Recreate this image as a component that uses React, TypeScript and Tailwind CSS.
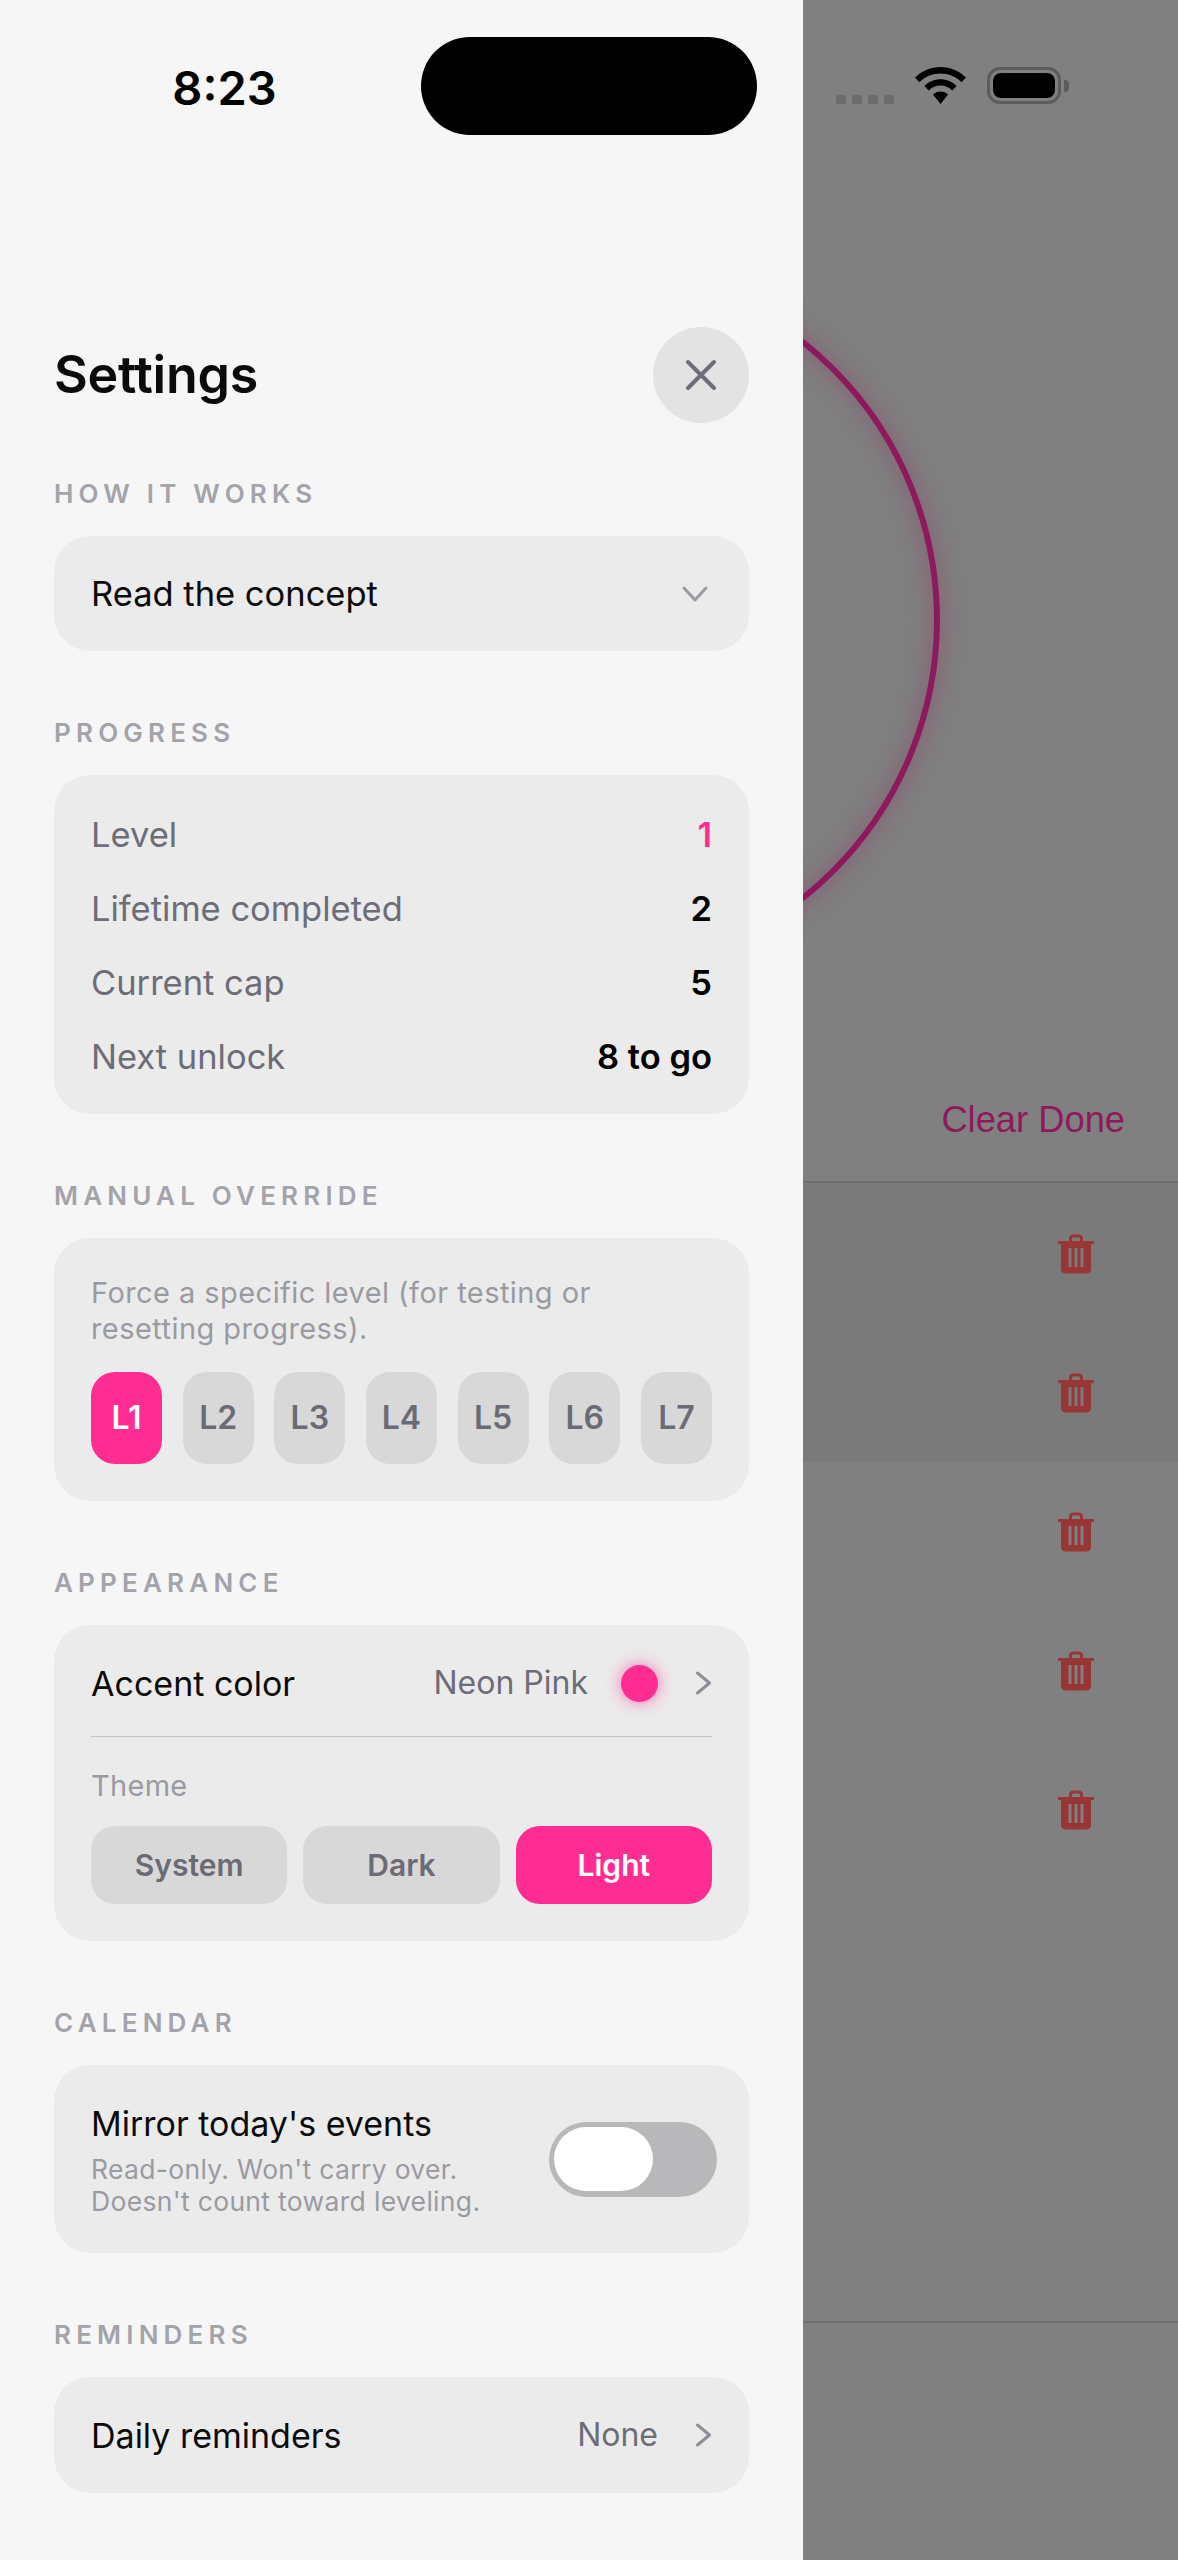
import React from "react";

const levels = ["L1", "L2", "L3", "L4", "L5", "L6", "L7"];
const stats = [
  { label: "Level", value: "1", accent: true },
  { label: "Lifetime completed", value: "2" },
  { label: "Current cap", value: "5" },
  { label: "Next unlock", value: "8 to go" },
];
const themes = ["System", "Dark", "Light"];
const taskRows = [0, 1, 2, 3, 4];

const Section = ({ title, children }: { title: string; children: React.ReactNode }) => (
  <section className="mb-[66px]">
    <h2 className="h-[32px] mb-[26px] text-[26px] leading-[32px] font-semibold tracking-[0.2em] text-[#a3a3ab]">
      {title}
    </h2>
    <div className="rounded-[36px] bg-[#ebebeb] px-[37px]">{children}</div>
  </section>
);

const ChevronRight = () => (
  <svg width="17" height="24" viewBox="0 0 17 24" fill="none" className="block">
    <path d="M2.5 2 L14.5 12 L2.5 22" stroke="#8e8e96" strokeWidth="3" strokeLinecap="round" strokeLinejoin="round" />
  </svg>
);

const TrashIcon = () => (
  <svg width="36" height="40" viewBox="0 0 36 40" className="block">
    <path
      fill="#983535"
      fillRule="evenodd"
      d="M11 7 V4.5 C11 2 13 0.5 15 0.5 H21 C23 0.5 25 2 25 4.5 V7 H35 C35.6 7 36 7.4 36 8 V9 C36 9.6 35.6 10 35 10 H33 V35 C33 37.8 31 39.5 28.5 39.5 H7.5 C5 39.5 3 37.8 3 35 V10 H1 C0.4 10 0 9.6 0 9 V8 C0 7.4 0.4 7 1 7 Z M14 7 H22 V5 C22 4 21.4 3.5 20.5 3.5 H15.5 C14.6 3.5 14 4 14 5 Z M10.5 14 V33 H13.5 V14 Z M16.5 14 V33 H19.5 V14 Z M22.5 14 V33 H25.5 V14 Z"
    />
  </svg>
);

const StatusIcons = () => (
  <div className="flex items-end h-[104px] pl-[33px]">
    <div className="flex gap-[6px]">
      {[0, 1, 2, 3].map((i) => (
        <span key={i} className="block w-[10px] h-[9px] rounded-[2px] bg-[#6b6b6b]" />
      ))}
    </div>
    <svg width="51" height="37" viewBox="0 0 51 37" className="block ml-[21px]">
      <path
        fill="#000"
        d="M25.5 0 C35 0 44 3.8 51 10.6 L46.6 15.2 C41 9.6 33.5 6.4 25.5 6.4 C17.5 6.4 10 9.6 4.4 15.2 L0 10.6 C7 3.8 16 0 25.5 0 Z M25.5 12.2 C31.5 12.2 37.2 14.6 41.6 18.9 L37.2 23.4 C34 20.3 29.9 18.6 25.5 18.6 C21.1 18.6 17 20.3 13.8 23.4 L9.4 18.9 C13.8 14.6 19.5 12.2 25.5 12.2 Z M25.5 24.4 C28.4 24.4 31 25.5 33 27.5 L25.5 37 L18 27.5 C20 25.5 22.6 24.4 25.5 24.4 Z"
      />
    </svg>
    <div className="flex items-center ml-[21px]">
      <div className="w-[74px] h-[37px] rounded-[13px] border-[3px] border-[#5c5c5c] p-[3px]">
        <div className="w-full h-full rounded-[8px] bg-black" />
      </div>
      <div className="w-[5px] h-[12px] ml-[3px] rounded-r-[4px] bg-[#5c5c5c]" />
    </div>
  </div>
);

const App = () => {
  return (
    <div className="flex w-[1178px] h-[2560px] overflow-hidden font-['Inter',sans-serif]">
      <aside className="w-[803px] shrink-0 h-full bg-[#f6f6f6] px-[54px] relative z-10">
        <div className="flex h-[98px] mt-[37px] items-center -mr-[8px]">
          <span className="w-[367px] shrink-0 text-center text-[47px] leading-none font-semibold text-black mt-[2px] pr-[26px]">
            8:23
          </span>
          <div className="w-[336px] h-[98px] shrink-0 rounded-full bg-black" />
        </div>

        <header className="flex items-center justify-between mt-[192px] mb-[55px] h-[96px]">
          <h1 className="text-[52px] leading-none font-semibold tracking-[-0.005em] text-[#0b0b0b]">Settings</h1>
          <button className="w-[96px] h-[96px] rounded-full bg-[#e3e3e3] flex items-center justify-center">
            <svg width="32" height="32" viewBox="0 0 32 32" fill="none">
              <path d="M3 3 L29 29 M29 3 L3 29" stroke="#6d6d78" strokeWidth="4" strokeLinecap="round" />
            </svg>
          </button>
        </header>

        <Section title="HOW IT WORKS">
          <div className="flex h-[115px] items-center justify-between">
            <span className="text-[34.5px] text-[#0b0b0b]">Read the concept</span>
            <svg width="26" height="16" viewBox="0 0 26 16" fill="none" className="block mr-[4px]">
              <path d="M2 2 L13 14 L24 2" stroke="#9a9aa0" strokeWidth="3" strokeLinecap="round" strokeLinejoin="round" />
            </svg>
          </div>
        </Section>

        <Section title="PROGRESS">
          <div className="pt-[23px] pb-[20px]">
            {stats.map((s) => (
              <div key={s.label} className="flex h-[74px] items-center justify-between text-[34.5px]">
                <span className="text-[#6d6d78]">{s.label}</span>
                <span className={`font-semibold ${s.accent ? "text-[#ff2d92]" : "text-black"}`}>{s.value}</span>
              </div>
            ))}
          </div>
        </Section>

        <Section title="MANUAL OVERRIDE">
          <div className="pt-[37px] pb-[37px]">
            <p className="text-[29px] leading-[36px] tracking-[0.015em] text-[#9a9aa2]">
              Force a specific level (for testing or
              <br />
              resetting progress).
            </p>
            <div className="flex justify-between mt-[25px]">
              {levels.map((l, i) => (
                <div
                  key={l}
                  className={`w-[71px] h-[92px] rounded-[24px] flex items-center justify-center text-[32px] font-semibold ${
                    i === 0 ? "bg-[#ff2d92] text-white" : "bg-[#d8d8d8] text-[#6b6b75]"
                  }`}
                >
                  {l}
                </div>
              ))}
            </div>
          </div>
        </Section>

        <Section title="APPEARANCE">
          <div className="flex h-[112px] pt-[5px] items-center border-b border-[#c4c4c8]">
            <span className="text-[34px] text-[#0b0b0b]">Accent color</span>
            <span className="ml-auto text-[32px] text-[#6d6d78]">Neon Pink</span>
            <span className="ml-[33px] mr-[37px] w-[37px] h-[37px] rounded-full bg-[#ff2d92] shadow-[0_0_16px_#ff2d92aa]" />
            <ChevronRight />
          </div>
          <div className="pb-[37px]">
            <p className="mt-[31px] text-[29px] leading-[36px] tracking-[0.01em] text-[#9a9aa2]">Theme</p>
            <div className="grid grid-cols-3 gap-[16px] mt-[22px]">
              {themes.map((t) => (
                <div
                  key={t}
                  className={`h-[78px] rounded-[24px] flex items-center justify-center text-[30px] font-semibold ${
                    t === "Light" ? "bg-[#ff2d92] text-white" : "bg-[#d8d8d8] text-[#6b6b75]"
                  }`}
                >
                  {t}
                </div>
              ))}
            </div>
          </div>
        </Section>

        <Section title="CALENDAR">
          <div className="flex items-center justify-between h-[188px]">
            <div className="pt-[2px]">
              <p className="text-[34px] leading-[42px] text-[#0b0b0b]">Mirror today's events</p>
              <p className="mt-[8px] text-[26.5px] leading-[32px] tracking-[0.012em] text-[#9a9aa2]">
                Read-only. Won't carry over.
                <br />
                Doesn't count toward leveling.
              </p>
            </div>
            <div className="w-[168px] h-[75px] mr-[-5px] rounded-full bg-[#b8b8ba] p-[5px] flex items-center">
              <div className="w-[99px] h-[64px] rounded-full bg-white" />
            </div>
          </div>
        </Section>

        <Section title="REMINDERS">
          <div className="flex h-[116px] items-center">
            <span className="text-[34px] text-[#0b0b0b]">Daily reminders</span>
            <span className="ml-auto mr-[37px] text-[32px] text-[#6d6d78]">None</span>
            <ChevronRight />
          </div>
        </Section>
      </aside>

      <main className="relative flex-1 h-full bg-[#808080] overflow-hidden">
        <div className="absolute left-[-579px] top-[262px] w-[716px] h-[716px] rounded-full border-[6px] border-[#8e1a5c] shadow-[0_0_28px_#8e1a5c55,inset_0_0_28px_#8e1a5c55]" />
        <div className="relative">
          <StatusIcons />
          <div className="flex justify-end h-[1079px] items-end border-b-2 border-[#707070] pb-[41px] pr-[53px]">
            <span className="font-['Liberation_Sans',sans-serif] text-[36.3px] leading-[40px] text-[#8e1a5c]">
              Clear Done
            </span>
          </div>
          <div className="bg-[#7a7a7a] h-[279px] -mb-[279px]" />
          <div className="flex flex-col items-end pr-[84px] pt-[51px] gap-[99px]">
            {taskRows.map((r) => (
              <TrashIcon key={r} />
            ))}
          </div>
          <div className="absolute left-0 right-0 top-[2321px] h-[2px] bg-[#707070]" />
        </div>
      </main>
    </div>
  );
};

export default App;
